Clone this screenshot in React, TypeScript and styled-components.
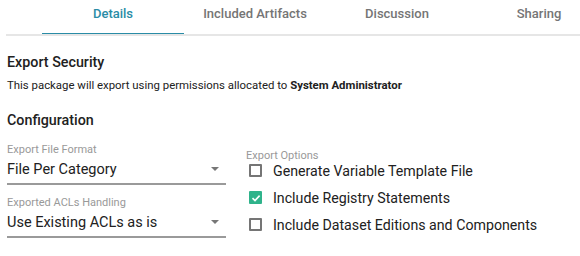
import React, {useState} from 'react';
import styled, {createGlobalStyle} from 'styled-components';

const GlobalStyle = createGlobalStyle`
  body {
    margin: 0;
    background: #ffffff;
    font-family: Roboto, "Liberation Sans", sans-serif;
    color: #212121;
  }
`;

const tabs = ['Details', 'Included Artifacts', 'Discussion', 'Sharing'];

type Option = {label: string; checked: boolean};

const initialOptions: Option[] = [
  {label: 'Generate Variable Template File', checked: false},
  {label: 'Include Registry Statements', checked: true},
  {label: 'Include Dataset Editions and Components', checked: false},
];

export default function App() {
  const [active, setActive] = useState(0);
  const [options, setOptions] = useState(initialOptions);

  const toggle = (i: number) =>
    setOptions(opts =>
      opts.map((o, j) => (j === i ? {...o, checked: !o.checked} : o))
    );

  return (
    <Page>
      <GlobalStyle />
      <TabBar>
        <TabScroller>
          {tabs.map((t, i) => (
            <Tab key={t} $active={i === active} onClick={() => setActive(i)}>
              {t}
            </Tab>
          ))}
        </TabScroller>
      </TabBar>

      <Content>
        <SectionTitle $top={16}>Export Security</SectionTitle>
        <Description>
          This package will export using permissions allocated to{' '}
          <b>System Administrator</b>
        </Description>

        <SectionTitle $top={17}>Configuration</SectionTitle>
        <ConfigGrid>
          <LeftColumn>
            <Field>
              <FieldLabel>Export File Format</FieldLabel>
              <Select>
                <span>File Per Category</span>
                <Caret />
              </Select>
            </Field>
            <Field>
              <FieldLabel>Exported ACLs Handling</FieldLabel>
              <Select>
                <span>Use Existing ACLs as is</span>
                <Caret />
              </Select>
            </Field>
          </LeftColumn>

          <OptionsColumn>
            <FieldLabel>Export Options</FieldLabel>
            <CheckList>
              {options.map((o, i) => (
                <CheckRow key={o.label} onClick={() => toggle(i)}>
                  <Box $checked={o.checked}>
                    {o.checked && (
                      <svg width="10" height="10" viewBox="0 0 10 10">
                        <path
                          d="M1.5 5.2 L4 7.6 L8.6 2.6"
                          fill="none"
                          stroke="#fff"
                          strokeWidth="1.6"
                        />
                      </svg>
                    )}
                  </Box>
                  <CheckLabel>{o.label}</CheckLabel>
                </CheckRow>
              ))}
            </CheckList>
          </OptionsColumn>
        </ConfigGrid>
      </Content>
    </Page>
  );
}

const Page = styled.div`
  width: 580px;
  height: 256px;
  overflow: hidden;
`;

const TabBar = styled.div`
  margin-left: 6px;
  border-bottom: 2px solid #e6e6e6;
  overflow: hidden;
`;

const TabScroller = styled.div`
  display: flex;
  padding-left: 36px;
  margin-bottom: -2px;
`;

const Tab = styled.div<{$active: boolean}>`
  box-sizing: border-box;
  flex: 0 0 142px;
  height: 36px;
  padding-bottom: 6px;
  display: flex;
  align-items: center;
  justify-content: center;
  font-size: 13px;
  font-weight: 500;
  color: ${p => (p.$active ? '#2a8ca6' : '#757575')};
  border-bottom: 3px solid ${p => (p.$active ? '#2a8ca6' : 'transparent')};
  cursor: pointer;
`;

const Content = styled.div`
  padding: 0 7px;
`;

const SectionTitle = styled.h2<{$top: number}>`
  margin: ${p => p.$top}px 0 0;
  font-size: 14.3px;
  font-weight: 500;
  line-height: 20px;
  color: #212121;
`;

const Description = styled.p`
  margin: 5px 0 0;
  font-size: 11.4px;
  line-height: 16px;
  color: #212121;

  b {
    font-weight: 700;
  }
`;

const ConfigGrid = styled.div`
  display: flex;
  gap: 20px;
  margin-top: 13px;
`;

const LeftColumn = styled.div`
  width: 219px;
  display: flex;
  flex-direction: column;
  gap: 11px;
`;

const Field = styled.div`
  display: flex;
  flex-direction: column;
`;

const FieldLabel = styled.div`
  font-size: 11px;
  line-height: 14px;
  color: #999999;
`;

const Select = styled.div`
  display: flex;
  align-items: center;
  justify-content: space-between;
  height: 24px;
  padding-bottom: 2px;
  font-size: 14.5px;
  color: #212121;
  border-bottom: 2px solid #9a9a9a;
`;

const Caret = styled.span`
  width: 0;
  height: 0;
  margin-right: 7px;
  border-left: 4px solid transparent;
  border-right: 4px solid transparent;
  border-top: 4px solid #777777;
`;

const OptionsColumn = styled.div`
  display: flex;
  flex-direction: column;
  padding-top: 6px;
`;

const CheckList = styled.div`
  display: flex;
  flex-direction: column;
  margin-top: -6px;
`;

const CheckRow = styled.div`
  display: flex;
  align-items: center;
  gap: 11px;
  height: 27px;
  padding-left: 3px;
  cursor: pointer;
`;

const Box = styled.span<{$checked: boolean}>`
  box-sizing: border-box;
  width: 13px;
  height: 13px;
  display: flex;
  align-items: center;
  justify-content: center;
  border-radius: 1px;
  border: ${p => (p.$checked ? 'none' : '2px solid #757575')};
  background: ${p => (p.$checked ? '#2fb38b' : 'transparent')};
`;

const CheckLabel = styled.span`
  font-size: 14.2px;
  color: #212121;
`;
